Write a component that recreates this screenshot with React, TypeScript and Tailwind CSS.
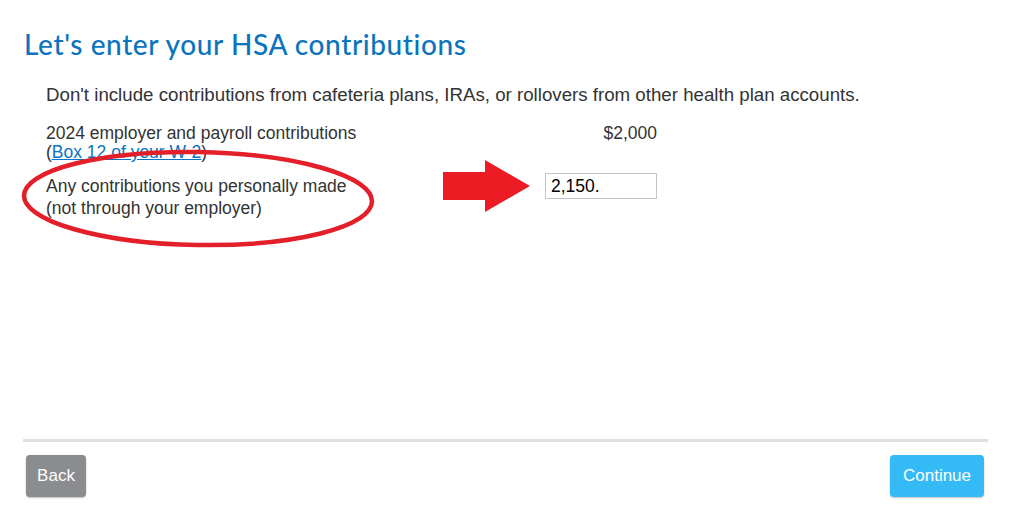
import React from 'react';

const body = "font-['Liberation_Sans',Arial,sans-serif]";

export default function App() {
  return (
    <div className={`relative w-[1014px] h-[519px] bg-white ${body} text-[#333] overflow-hidden`}>
      <div className="flex flex-col h-full pl-[23px] pr-[26px]">
        <h1 className="pt-[27px] pl-px text-[28px] leading-[34px] text-[#0b74bd] font-['Lato','Open_Sans',sans-serif] font-medium tracking-[0.6px]">
          Let's enter your HSA contributions
        </h1>

        <p className="mt-[23px] pl-[23px] text-[18.7px] leading-[22px]">
          Don't include contributions from cafeteria plans, IRAs, or rollovers from other health plan accounts.
        </p>

        <div className="mt-[18px] pl-[23px] flex flex-col">
          <div className="flex w-[611px] justify-between">
            <div className="text-[17.5px] leading-[19px]">
              <div>2024 employer and payroll contributions</div>
              <div>
                (<a href="#" className="text-[#0a74c4] underline">Box 12 of your W-2</a>)
              </div>
            </div>
            <div className="text-[17.5px] leading-[19px]">$2,000</div>
          </div>

          <div className="mt-[13px] flex w-[611px] justify-between">
            <div className="text-[17.5px] leading-[22px]">
              <div>Any contributions you personally made</div>
              <div>(not through your employer)</div>
            </div>
            <input
              defaultValue="2,150."
              className="-mt-[2px] w-[112px] h-[26px] border border-[#c4c4c4] px-[5px] text-[17.5px] text-black outline-none"
            />
          </div>
        </div>

        <div className="flex-1" />

        <div className="h-[3px] bg-[#e0e0e0] mb-[13px]" />
        <div className="flex justify-between items-start pl-[3px] pr-[4px] mb-[22px]">
          <button className="w-[60px] h-[42px] rounded-[4px] bg-[#8a8c90] text-white text-[17px] shadow-[0_1px_2px_rgba(0,0,0,0.25)]">
            Back
          </button>
          <button className="w-[94px] h-[42px] rounded-[4px] bg-[#34bbf6] text-white text-[17px] shadow-[0_1px_2px_rgba(0,0,0,0.25)]">
            Continue
          </button>
        </div>
      </div>

      {/* annotation overlays */}
      <svg className="absolute left-0 top-0 pointer-events-none" width="1014" height="519">
        <ellipse
          cx="198"
          cy="198.5"
          rx="174"
          ry="46.5"
          transform="rotate(1 198 198.5)"
          fill="none"
          stroke="#e3202a"
          strokeWidth="4.5"
        />
        <polygon
          points="443,172 485,172 485,160 530,186 485,212 485,200 443,200"
          fill="#ec1c24"
          strokeLinejoin="round"
        />
      </svg>
    </div>
  );
}
